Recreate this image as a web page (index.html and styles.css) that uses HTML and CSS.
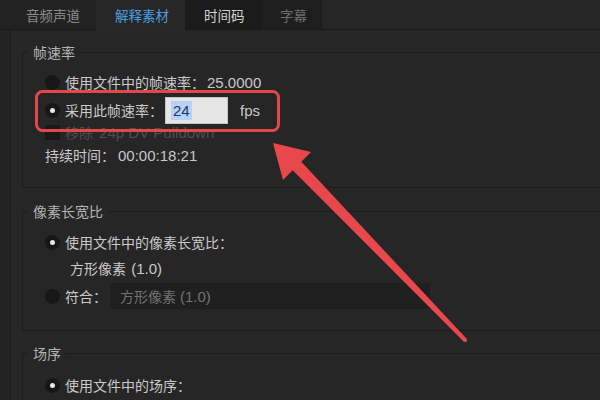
FILE: index.html
```html
<!DOCTYPE html>
<html lang="zh-CN">
<head>
<meta charset="utf-8">
<title>解释素材</title>
<link rel="stylesheet" href="styles.css">
</head>
<body>
<div class="screen">
  <div class="tabs">
    <div class="tab tab-audio">音频声道</div>
    <div class="tab tab-active">解释素材</div>
    <div class="tab tab-timecode">时间码</div>
    <div class="tab tab-caption">字幕</div>
    <div class="tab-fill"></div>
  </div>
  <div class="panel">
    <fieldset class="group group-fps">
      <legend>帧速率</legend>
      <div class="row row-a">
        <span class="radio"></span>
        <span class="label">使用文件中的帧速率：</span><span class="num">25.0000</span>
      </div>
      <div class="row row-b">
        <span class="radio on"></span>
        <span class="label">采用此帧速率：</span>
        <span class="input"><span class="sel">24</span></span>
        <span class="num unit">fps</span>
      </div>
      <div class="row row-c dim">
        <span class="check"></span>
        <span class="label">移除<span class="num"> 24p DV Pulldown</span></span>
      </div>
      <div class="row row-d">
        <span class="label">持续时间：</span><span class="num">00:00:18:21</span>
      </div>
    </fieldset>

    <fieldset class="group group-par">
      <legend>像素长宽比</legend>
      <div class="row row-a">
        <span class="radio on"></span>
        <span class="label">使用文件中的像素长宽比：</span>
      </div>
      <div class="row row-sub">
        <span class="label">方形像素 <span class="num">(1.0)</span></span>
      </div>
      <div class="row row-match">
        <span class="radio"></span>
        <span class="label">符合：</span>
        <span class="select">方形像素 <span class="num">(1.0)</span></span>
      </div>
    </fieldset>

    <fieldset class="group group-field">
      <legend>场序</legend>
      <div class="row row-a">
        <span class="radio on"></span>
        <span class="label">使用文件中的场序：</span>
      </div>
    </fieldset>
  </div>

  <svg class="annot" width="600" height="400" viewBox="0 0 600 400">
    <rect x="36.5" y="91.5" width="242" height="39" rx="6" ry="6" fill="none" stroke="#e2474a" stroke-width="3"/>
    <polygon fill="#e8484b" points="273,143 311,152 301.3,161.8 466.4,338.6 463.6,341.4 292.7,170.2 283,180"/>
    <circle cx="465" cy="340" r="2.1" fill="#e8484b"/>
  </svg>
</div>
</body>
</html>
```

FILE: styles.css
```css
html, body {
  margin: 0;
  padding: 0;
  background: #222222;
}

body {
  font-family: "Liberation Sans", "Noto Sans CJK SC", sans-serif;
  font-size: 14px;
  color: #c8c8c8;
}

.screen {
  position: relative;
  width: 600px;
  height: 400px;
  overflow: hidden;
  background: #232323;
}

.tabs {
  display: flex;
  height: 30px;
}

.tab {
  flex: none;
  display: flex;
  align-items: center;
  white-space: nowrap;
  font-family: "Noto Sans CJK SC", sans-serif;
  font-size: 13.5px;
  padding: 0 0 0 18px;
  border-bottom: 1px solid #1a1a1a;
  box-sizing: border-box;
}

.tab-audio {
  width: 96px;
  padding-left: 26px;
  background: #222222;
  color: #8c8c8c;
}

.tab-active {
  width: 89px;
  padding-left: 19px;
  background: #272727;
  color: #4c9ee0;
  border-bottom-color: #272727;
}

.tab-timecode {
  width: 77px;
  padding-left: 19px;
  background: #1b1b1b;
  color: #d4d4d4;
}

.tab-caption {
  width: 60px;
  background: #1e1e1e;
  color: #6c6c6c;
}

.tab-fill {
  flex: 1;
  background: #262626;
  border-bottom: 1px solid #1a1a1a;
}

.panel {
  margin-left: 10px;
  border-left: 1px solid #1c1c1c;
  background: #262626;
  padding: 12px 0 0 11px;
  height: 370px;
  box-sizing: border-box;
}

.group {
  margin: 0 -60px 0 0;
  padding: 0;
  border: 1px solid #1c1c1c;
  min-width: 0;
}

.group legend {
  margin-left: 6px;
  padding: 0 4px;
  line-height: 20px;
  font-family: "Noto Sans CJK SC", sans-serif;
  font-size: 14px;
  color: #b4b4b4;
}

.group-fps {
  padding-top: 8px;
  padding-bottom: 21px;
}

.group-par {
  margin-top: 13px;
  padding-top: 9px;
  padding-bottom: 21px;
}

.group-field {
  margin-top: 12px;
  padding-top: 10px;
  padding-bottom: 20px;
}

.row {
  display: flex;
  align-items: center;
  height: 24px;
  padding-left: 22px;
  white-space: nowrap;
}

.label {
  font-family: "Noto Sans CJK SC", sans-serif;
  font-size: 14px;
  color: #cacaca;
}

.num {
  font-family: "Liberation Sans", sans-serif;
  font-size: 15px;
  margin-left: 2px;
}

.radio {
  width: 15px;
  height: 15px;
  border-radius: 50%;
  background: #171717;
  margin-right: 5px;
  display: flex;
  align-items: center;
  justify-content: center;
  flex: none;
}

.radio.on::after {
  content: "";
  width: 5px;
  height: 5px;
  border-radius: 50%;
  background: #e8e8e8;
}

.check {
  width: 15px;
  height: 15px;
  background: #191919;
  margin-right: 5px;
  flex: none;
}

.row-b {
  height: 28px;
  margin-top: 2px;
}

.input {
  width: 63px;
  height: 27px;
  box-sizing: border-box;
  margin-left: 2px;
  background: #e6e6e6;
  border: 1px solid #c4c4c4;
  display: flex;
  align-items: center;
  padding-left: 5px;
}

.sel {
  font-family: "Liberation Sans", sans-serif;
  font-size: 15px;
  color: #1d3766;
  background: #b6d2f6;
  padding: 1px 2px;
  line-height: 17px;
}

.unit {
  margin-left: 12px;
  color: #c8c8c8;
}

.row-c {
  height: 16px;
}

.dim .label,
.dim .num {
  color: #4e4e4e;
}

.row-d {
  height: 22px;
  margin-top: 4px;
}

.row-d .num {
  margin-left: 3px;
}

.row-sub {
  margin-top: 2px;
  padding-left: 47px;
}

.row-match {
  height: 26px;
  margin-top: 3px;
}

.select {
  margin-left: 3px;
  width: 320px;
  height: 26px;
  box-sizing: border-box;
  background: #1f1f1f;
  display: flex;
  align-items: center;
  padding-left: 10px;
  font-family: "Noto Sans CJK SC", sans-serif;
  font-size: 14px;
  color: #727272;
}

.select .num {
  margin-left: 4px;
}

.annot {
  position: absolute;
  left: 0;
  top: 0;
  pointer-events: none;
}
```
